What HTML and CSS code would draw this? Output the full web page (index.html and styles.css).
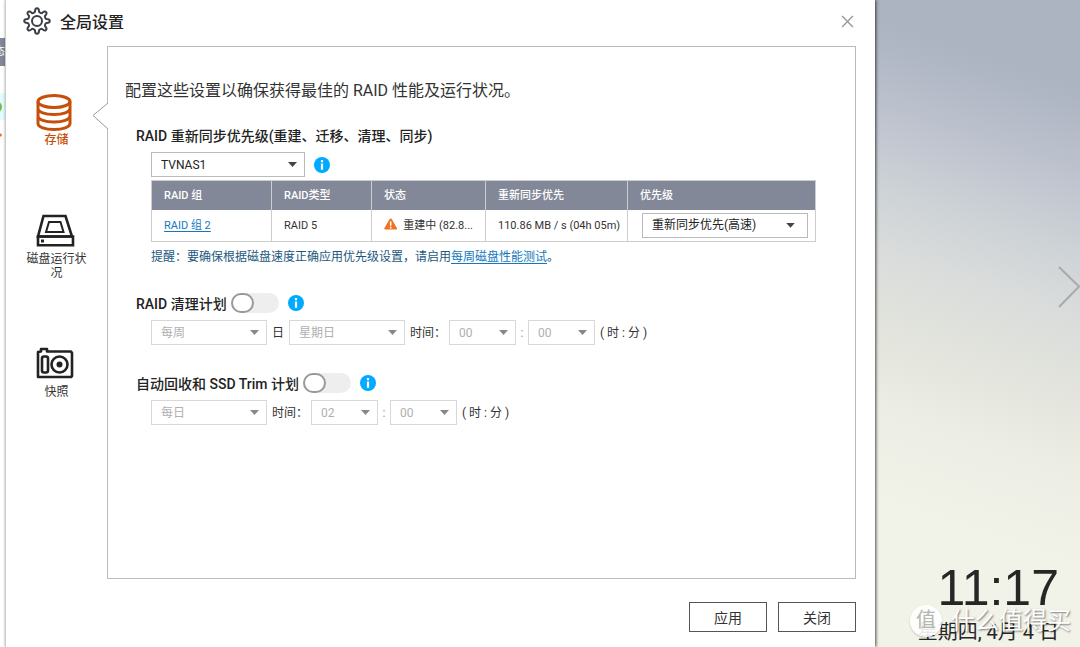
FILE: index.html
```html
<!DOCTYPE html>
<html lang="zh-CN">
<head>
<meta charset="utf-8">
<title>全局设置</title>
<meta name="viewport" content="width=device-width, initial-scale=1">
<link rel="stylesheet" href="styles.css">
</head>
<body>
<div class="screen">
  <aside class="underlay">
    <div class="underlay-head"><span>状态</span></div>
    <div class="underlay-row"><i class="dot dot-ok"></i></div>
    <div class="underlay-row underlay-plain"><i class="dot dot-warn"></i></div>
  </aside>

  <main class="dialog">
    <header class="dialog-head">
      <svg class="gear" viewBox="0 0 28 28" fill="none" stroke="#3b3f46" stroke-width="2" stroke-linejoin="round">
        <path d="M12 4.5 Q12 1.2 14 1.2 Q16 1.2 16 4.5 Q16.2 5.4 17.4 5.8 Q18.6 6.4 19.3 5.9 Q21.6 3.6 23 5 Q24.4 6.4 22.1 8.7 Q21.6 9.4 22.2 10.6 Q22.6 11.8 23.5 12 Q26.8 12 26.8 14 Q26.8 16 23.5 16 Q22.6 16.2 22.2 17.4 Q21.6 18.6 22.1 19.3 Q24.4 21.6 23 23 Q21.6 24.4 19.3 22.1 Q18.6 21.6 17.4 22.2 Q16.2 22.6 16 23.5 Q16 26.8 14 26.8 Q12 26.8 12 23.5 Q11.8 22.6 10.6 22.2 Q9.4 21.6 8.7 22.1 Q6.4 24.4 5 23 Q3.6 21.6 5.9 19.3 Q6.4 18.6 5.8 17.4 Q5.4 16.2 4.5 16 Q1.2 16 1.2 14 Q1.2 12 4.5 12 Q5.4 11.8 5.8 10.6 Q6.4 9.4 5.9 8.7 Q3.6 6.4 5 5 Q6.4 3.6 8.7 5.9 Q9.4 6.4 10.6 5.8 Q11.8 5.4 12 4.5Z"/>
        <circle cx="14" cy="14" r="5"/>
      </svg>
      <h1>全局设置</h1>
      <button class="close" type="button" aria-label="关闭窗口">
        <svg viewBox="0 0 12 12" stroke="#999" stroke-width="1.3"><path d="M1 1L11 11M11 1L1 11"/></svg>
      </button>
    </header>

    <div class="dialog-body">
      <nav class="tabs">
        <button class="tab active" type="button">
          <svg viewBox="0 0 42 37" fill="none" stroke="#c64f0a" stroke-width="3">
            <ellipse cx="18" cy="7.5" rx="16" ry="6"/>
            <path d="M2 7.500V29.500C2 33 9 35.500 18 35.500S34 33 34 29.500V7.500M2 14.500C2 18 9 20.500 18 20.500S34 18 34 14.500M2 22C2 25.500 9 28 18 28S34 25.500 34 22"/>
          </svg>
          <span>存储</span>
        </button>
        <button class="tab" type="button">
          <svg viewBox="0 0 42 37" fill="none" stroke="#222" stroke-width="2.600">
            <path d="M7.500 3H29.500L36 23.500H2Z"/><path d="M2 23.500H37V32.300H2Z"/>
            <path d="M13 9H24.500L27.500 19H10Z" stroke-width="2"/>
            <path d="M5 28H8" stroke-width="3"/>
          </svg>
          <span>磁盘运行状况</span>
        </button>
        <button class="tab" type="button">
          <svg viewBox="0 0 42 37" fill="none" stroke="#222" stroke-width="2.600" stroke-linejoin="round">
            <path d="M2 31V6L5 5.500V3H11V5.500H35L36 7V30L35 31Z"/>
            <rect x="6" y="10.500" width="6" height="16" rx="2"/>
            <circle cx="23.500" cy="18.500" r="8"/><circle cx="23.500" cy="18.500" r="3" fill="#222" stroke="none"/>
          </svg>
          <span>快照</span>
        </button>
      </nav>

      <section class="panel">
        <svg class="pointer" viewBox="0 0 17 28" fill="#fff" stroke="#999"><path d="M16 1L1 13.500L16 27"/></svg>
        <h2>配置这些设置以确保获得最佳的 RAID 性能及运行状况。</h2>

        <section class="group">
          <h3><label for="nas">RAID 重新同步优先级(重建、迁移、清理、同步)</label></h3>
          <div class="fields">
            <div class="pick pick-nas"><select id="nas"><option>TVNAS1</option></select></div>
            <button class="info info-field" type="button" aria-label="说明"><svg viewBox="0 0 16 16"><circle cx="8" cy="8" r="8" fill="#00aaff"/><path d="M8 3V5.200M8 6.500V12.800" stroke="#fff" stroke-width="2.200"/></svg></button>
          </div>
          <table class="raid">
            <colgroup><col class="c1"><col class="c2"><col class="c3"><col class="c4"><col></colgroup>
            <thead><tr><th>RAID 组</th><th>RAID类型</th><th>状态</th><th>重新同步优先</th><th>优先级</th></tr></thead>
            <tbody><tr>
              <td><a class="group-link" href="#">RAID 组 2</a></td>
              <td>RAID 5</td>
              <td><div class="state"><svg viewBox="0 0 16 14"><path d="M8 0.500Q9 0.500 9.600 1.700L15.600 12Q16.200 13.700 14.500 13.700H1.500Q-0.200 13.700 0.400 12L6.400 1.700Q7 0.500 8 0.500Z" fill="#ec7424"/><path d="M8 4V9M8 10.300V12.300" stroke="#fff" stroke-width="1.800"/></svg><span>重建中 (82.8...</span></div></td>
              <td>110.86 MB / s (04h 05m)</td>
              <td class="cell-pick"><div class="pick pick-priority"><select aria-label="优先级"><option>重新同步优先(高速)</option></select></div></td>
            </tr></tbody>
          </table>
          <p class="hint">提醒：要确保根据磁盘速度正确应用优先级设置，请启用<a href="#">每周磁盘性能测试</a>。</p>
        </section>

        <section class="group">
          <div class="title-row">
            <h3><label for="scrub">RAID 清理计划</label></h3>
            <input class="switch" id="scrub" type="checkbox">
            <button class="info" type="button" aria-label="说明"><svg viewBox="0 0 16 16"><circle cx="8" cy="8" r="8" fill="#00aaff"/><path d="M8 3V5.200M8 6.500V12.800" stroke="#fff" stroke-width="2.200"/></svg></button>
          </div>
          <div class="fields">
            <div class="pick pick-period"><select disabled aria-label="周期"><option>每周</option></select></div>
            <label for="day">日</label>
            <div class="pick pick-period"><select id="day" disabled><option>星期日</option></select></div>
            <label class="time-label" for="h1">时间：</label>
            <div class="pick pick-time"><select id="h1" disabled><option>00</option></select></div>
            <span class="colon">:</span>
            <div class="pick pick-time"><select disabled aria-label="分"><option>00</option></select></div>
            <span class="unit">( 时 : 分 )</span>
          </div>
        </section>

        <section class="group">
          <div class="title-row">
            <h3><label for="trim">自动回收和 SSD Trim 计划</label></h3>
            <input class="switch" id="trim" type="checkbox">
            <button class="info" type="button" aria-label="说明"><svg viewBox="0 0 16 16"><circle cx="8" cy="8" r="8" fill="#00aaff"/><path d="M8 3V5.200M8 6.500V12.800" stroke="#fff" stroke-width="2.200"/></svg></button>
          </div>
          <div class="fields">
            <div class="pick pick-period"><select disabled aria-label="周期"><option>每日</option></select></div>
            <label class="time-label" for="h2">时间：</label>
            <div class="pick pick-time"><select id="h2" disabled><option>02</option></select></div>
            <span class="colon">:</span>
            <div class="pick pick-time"><select disabled aria-label="分"><option>00</option></select></div>
            <span class="unit">( 时 : 分 )</span>
          </div>
        </section>
      </section>
    </div>

    <footer class="actions">
      <button type="button">应用</button>
      <button type="button">关闭</button>
    </footer>
  </main>

  <aside class="desktop">
    <button class="next" type="button" aria-label="下一页"><svg viewBox="0 0 22 42" fill="none" stroke="#aaa" stroke-width="2"><path d="M1 1L21 20.500L1 41"/></svg></button>
    <div class="clock">
      <time class="hour">11:17</time>
      <div class="date">星期四, 4月 4 日</div>
    </div>
    <div class="watermark"><span class="seal">值</span><span>什么值得买</span></div>
  </aside>
</div>
</body>
</html>
```

FILE: styles.css
```css
* { box-sizing: border-box; }
body {
  margin: 0;
  font: 12px/18px Roboto, "Noto Sans CJK SC", sans-serif;
  color: #333;
}
h1, h2, h3, p { margin: 0; }
button { font: inherit; color: inherit; background: none; border: 0; padding: 0; cursor: pointer; }
svg { display: block; }

.screen { display: flex; min-height: 100vh; overflow: hidden; }

/* Window behind the dialog */
.underlay { width: 5px; flex: none; overflow: hidden; padding-top: 38px; background: #fff; }
.underlay-head {
  display: flex; justify-content: flex-end; align-items: center;
  height: 28px; margin-bottom: 27px;
  background: #828897; color: #fff; font-size: 11px; white-space: nowrap;
}
.underlay-row { display: flex; justify-content: flex-end; align-items: center; height: 27px; padding-right: 3px; background: #e2fdfd; }
.underlay-plain { background: none; height: 30px; }
.dot { flex: none; width: 12px; height: 12px; border-radius: 50%; }
.dot-ok { background: #6fbe44; }
.dot-warn { width: 8px; height: 4px; background: #ec7424; }

/* Dialog */
.dialog {
  position: relative; z-index: 1;
  flex: 1; min-width: 0;
  display: flex; flex-direction: column;
  border-left: 1px solid #ccc;
  background: #fff;
  box-shadow: 1px 0 3px rgba(0, 0, 0, .7);
}
.dialog-head { display: flex; align-items: center; gap: 9px; height: 46px; padding: 0 21px 4px 17px; }
.gear { width: 28px; height: 28px; }
.dialog-head h1 { flex: 1; padding-top: 3px; font-size: 16px; line-height: 24px; font-weight: 500; color: #222; }
.close svg { width: 13px; height: 13px; }

.dialog-body { flex: 1; display: flex; padding-right: 19px; }
.tabs { width: 101px; flex: none; display: flex; flex-direction: column; align-items: center; gap: 66px; padding-top: 48px; }
.tab { width: 64px; display: flex; flex-direction: column; align-items: center; gap: 2px; line-height: 14px; }
.tab svg { width: 42px; height: 37px; }
.tab.active { color: #c64f0a; font-weight: 500; }

.panel { position: relative; flex: 1; min-width: 0; border: 1px solid #bbb; padding: 32px 39px 24px 17px; }
.pointer { position: absolute; left: -16px; top: 55px; width: 17px; height: 28px; }
.panel h2 { font-size: 16px; line-height: 24px; font-weight: 400; margin-bottom: 23px; }
.group { padding-left: 26px; margin-bottom: 28px; }
.group h3 { font-size: 14px; line-height: 20px; font-weight: 500; margin-left: -15px; color: #222; }
.title-row { display: flex; align-items: center; height: 20px; }
.title-row h3 { padding-top: 2px; }
.title-row .info { margin-left: 9px; }

.fields { display: flex; align-items: center; height: 25px; margin-top: 6px; }
.title-row + .fields { margin-top: 7px; }
.pick { position: relative; height: 25px; }
.pick::after {
  content: ""; position: absolute; right: 8px; top: 10px;
  width: 9px; height: 5px; background: #444;
  clip-path: polygon(0 0, 100% 0, 50% 100%);
  pointer-events: none;
}
.pick select {
  appearance: none; display: block; width: 100%; height: 100%;
  padding: 0 20px 0 9px; margin: 0;
  border: 1px solid #bbb; border-radius: 0; background: #fff;
  font: inherit; color: #222; opacity: 1;
}
.pick select:disabled { border-color: #d8d8d8; color: #b0b0b0; }
.pick:has(select:disabled)::after { background: #888; }
.pick-nas { width: 154px; }
.pick-period { width: 116px; }
.pick-time { width: 67px; }
.fields label { padding: 0 5px; }
.fields .time-label { width: 44px; white-space: nowrap; }
.colon { width: 12px; text-align: center; color: #999; }
.unit { padding-left: 5px; white-space: pre; }
.info svg { width: 16px; height: 16px; }
.info-field { margin-left: 9px; }

.switch {
  appearance: none; margin: 0 0 0 4px; width: 48px; height: 20px;
  border-radius: 10px; background: #eee;
}
.switch::before {
  content: ""; display: block; box-sizing: border-box; width: 23px; height: 20px;
  border: 2px solid #999; border-radius: 10px; background: #fff;
}
.switch:checked::before { margin-left: auto; }

/* RAID table */
.raid { width: 100%; margin-top: 3px; table-layout: fixed; border-collapse: collapse; font-size: 11px; border: 1px solid #ccc; }
.c1 { width: 120px; }
.c2 { width: 100px; }
.c3 { width: 114px; }
.c4 { width: 142px; }
.raid th { height: 29px; padding: 2px 12px 0; text-align: left; font-weight: 500; background: #828897; color: #fff; border-right: 1px solid #ccc; }
.raid td { height: 32px; padding: 2px 12px 0; border-right: 1px solid #ccc; white-space: nowrap; }
.raid .cell-pick { padding: 0 7px 0 14px; }
.pick-priority { font-size: 12px; }
.pick-priority::after { right: 13px; }
.state { display: flex; align-items: center; gap: 6px; }
.state svg { width: 16px; height: 18px; padding-bottom: 4px; }
a { color: #1379bd; text-underline-offset: 2px; }
.hint { margin-top: 7px; line-height: 16px; color: #1b587d; }

.actions { display: flex; justify-content: flex-end; gap: 11px; padding: 23px 19px 15px; }
.actions button { width: 78px; height: 30px; padding-top: 2px; border: 1px solid #555; font-size: 14px; }

/* Desktop wallpaper */
.desktop {
  position: relative; width: 205px; flex: none; overflow: hidden;
  display: flex; flex-direction: column; justify-content: space-between;
  background: linear-gradient(198deg, #acb3c1 0%, #acb3c1 12%, #b9bfcb 22%, #c3c7d1 28%, #cdd2d6 35%, #d9dcdb 44%, #e1e3dc 54%, #ecede4 66%, #f1f2e8 80%, #f1f2e8 100%);
}
.next { align-self: flex-end; margin-top: 266px; }
.next svg { width: 22px; height: 42px; }
.clock { padding: 0 21px 1px 0; text-align: right; color: #262626; }
.hour { display: block; font: 50px/52px "Liberation Sans", sans-serif; }
.date { font-size: 20px; line-height: 28px; white-space: nowrap; margin-top: 4px; }
.watermark {
  position: absolute; right: 9px; bottom: 10px;
  display: flex; align-items: center; gap: 9px;
  color: #fff; font-size: 24px; line-height: 32px; white-space: nowrap;
  text-shadow: 1px 1px 2px rgba(0, 0, 0, .5);
}
.seal {
  width: 32px; height: 32px; border-radius: 50%; text-align: center;
  background: rgba(255, 255, 255, .9); color: #b5b5b0; font-size: 20px; line-height: 31px;
  text-shadow: none; box-shadow: 0 1px 2px rgba(0, 0, 0, .2);
}
```
